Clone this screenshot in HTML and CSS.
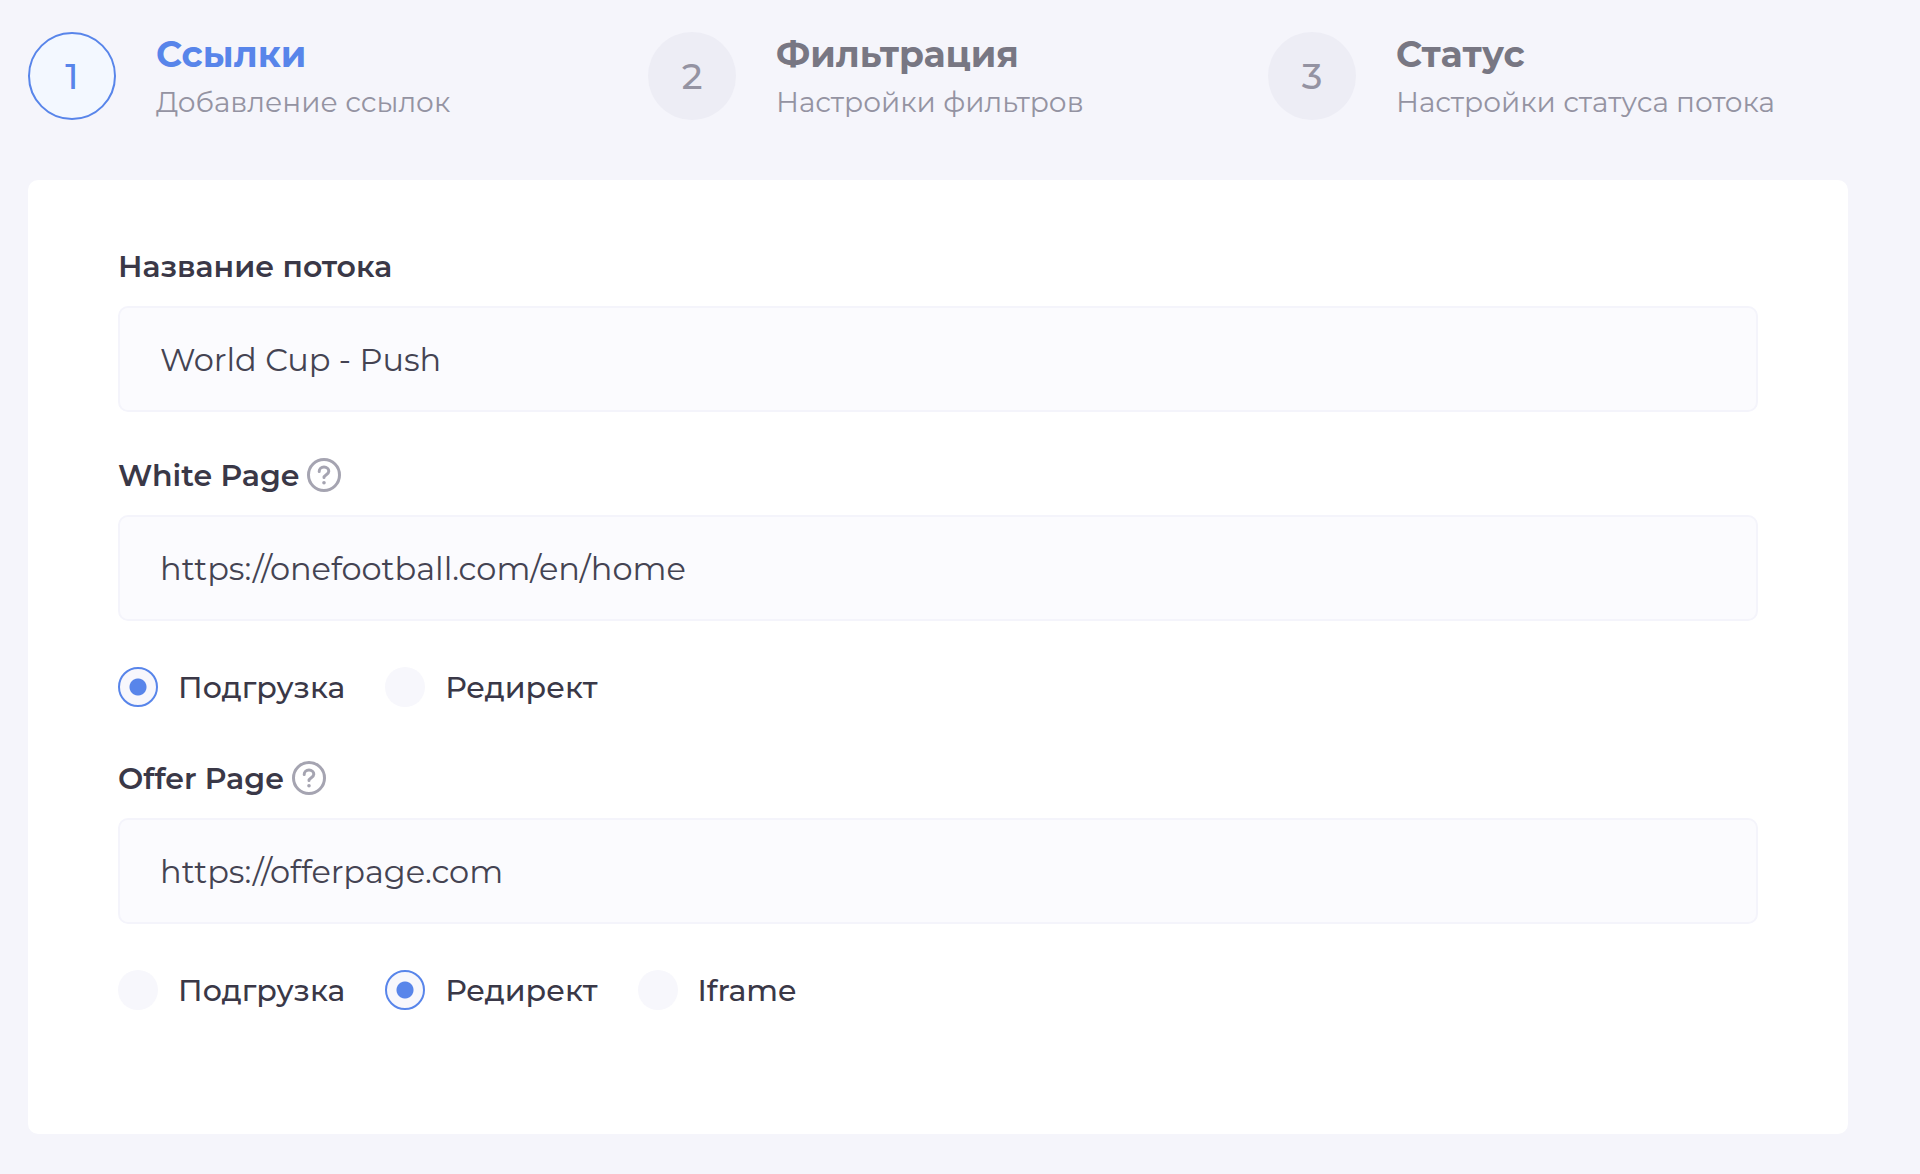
FILE: index.html
```html
<!DOCTYPE html>
<html lang="ru">
<head>
    <meta charset="UTF-8">
    <meta name="viewport" content="width=device-width, initial-scale=1.0">
    <title>Создание потока</title>
    <link rel="stylesheet" href="styles.css">
</head>
<body>
    <ol class="steps">
        <li class="step active">
            <span class="step-number">1</span>
            <div class="step-text">
                <div class="step-title">Ссылки</div>
                <div class="step-desc">Добавление ссылок</div>
            </div>
        </li>
        <li class="step">
            <span class="step-number">2</span>
            <div class="step-text">
                <div class="step-title">Фильтрация</div>
                <div class="step-desc">Настройки фильтров</div>
            </div>
        </li>
        <li class="step">
            <span class="step-number">3</span>
            <div class="step-text">
                <div class="step-title">Статус</div>
                <div class="step-desc">Настройки статуса потока</div>
            </div>
        </li>
    </ol>

    <form class="card">
        <div class="field">
            <div class="field-label">
                <label for="name">Название потока</label>
            </div>
            <input class="input" type="text" id="name" value="World Cup - Push">
        </div>

        <div class="field">
            <div class="field-label">
                <label for="whitePage">White Page</label>
                <svg class="help" viewBox="0 0 34 34" fill="none" stroke="currentColor">
                    <circle cx="17" cy="17" r="15.5" stroke-width="3"/>
                    <path d="M12.2 13.4c0-2.6 2-4.3 4.8-4.3s4.8 1.7 4.8 4.2c0 3.2-4.8 3.4-4.8 6.2" stroke-width="3" stroke-linecap="round"/>
                    <circle cx="17" cy="24.7" r="1.8" fill="currentColor" stroke="none"/>
                </svg>
            </div>
            <input class="input" type="text" id="whitePage" value="https://onefootball.com/en/home">
            <div class="radios">
                <label class="radio"><input type="radio" name="whiteMode" checked>Подгрузка</label>
                <label class="radio"><input type="radio" name="whiteMode">Редирект</label>
            </div>
        </div>

        <div class="field">
            <div class="field-label">
                <label for="offerPage">Offer Page</label>
                <svg class="help" viewBox="0 0 34 34" fill="none" stroke="currentColor">
                    <circle cx="17" cy="17" r="15.5" stroke-width="3"/>
                    <path d="M12.2 13.4c0-2.6 2-4.3 4.8-4.3s4.8 1.7 4.8 4.2c0 3.2-4.8 3.4-4.8 6.2" stroke-width="3" stroke-linecap="round"/>
                    <circle cx="17" cy="24.7" r="1.8" fill="currentColor" stroke="none"/>
                </svg>
            </div>
            <input class="input" type="text" id="offerPage" value="https://offerpage.com">
            <div class="radios">
                <label class="radio"><input type="radio" name="offerMode">Подгрузка</label>
                <label class="radio"><input type="radio" name="offerMode" checked>Редирект</label>
                <label class="radio"><input type="radio" name="offerMode">Iframe</label>
            </div>
        </div>
    </form>
</body>
</html>
```

FILE: styles.css
```css
* {
    box-sizing: border-box;
}
body {
    margin: 0;
    padding: 32px 72px 40px 28px;
    background: #f5f5fb;
    color: #3a3847;
    font-family: Montserrat, Inter, sans-serif;
}

/* steps */
.steps {
    display: grid;
    grid-template-columns: repeat(3, 1fr);
    gap: 40px;
    margin: 0 0 56px;
    padding: 0;
    list-style: none;
}
.step {
    display: flex;
    align-items: flex-start;
    gap: 40px;
    white-space: nowrap;
}
.step-number {
    display: flex;
    align-items: center;
    justify-content: center;
    flex: none;
    width: 88px;
    height: 88px;
    border-radius: 50%;
    background: #ededf5;
    color: #9493a2;
    font-size: 36px;
    font-weight: 500;
}
.step-title {
    margin-bottom: 4px;
    color: #787783;
    font-size: 36px;
    font-weight: 700;
    line-height: 44px;
}
.step-desc {
    color: #9493a2;
    font-size: 28px;
    line-height: 44px;
}
.step.active .step-number {
    border: 2px solid #5885ea;
    background: #f3f8ff;
    color: #5885ea;
}
.step.active .step-title {
    color: #5885ea;
}

/* form */
.card {
    padding: 66px 90px 124px;
    border-radius: 10px;
    background: #fff;
}
.field {
    margin-bottom: 43px;
}
.field:last-child {
    margin: 51px 0 0;
}
.field-label {
    display: flex;
    align-items: center;
    gap: 8px;
    height: 40px;
    margin-bottom: 20px;
    font-size: 30px;
    font-weight: 600;
}
.help {
    width: 34px;
    height: 34px;
    color: #a5a4b1;
}
.input {
    display: block;
    width: 100%;
    height: 106px;
    padding: 0 40px;
    border: 2px solid #f4f4fb;
    border-radius: 10px;
    outline: none;
    background: #fbfbfe;
    color: #444352;
    font-family: inherit;
    font-size: 32px;
}
.radios {
    display: flex;
    gap: 40px;
    margin-top: 46px;
}
.radio {
    display: flex;
    align-items: center;
    gap: 20px;
    font-size: 30px;
    font-weight: 500;
}
.radio input {
    appearance: none;
    width: 40px;
    height: 40px;
    margin: 0;
    border-radius: 50%;
    background: #f7f7fc;
}
.radio input:checked {
    border: 2px solid #5885ea;
    background: radial-gradient(circle, #5885ea 8px, #f7f7fc 9px);
}
```
